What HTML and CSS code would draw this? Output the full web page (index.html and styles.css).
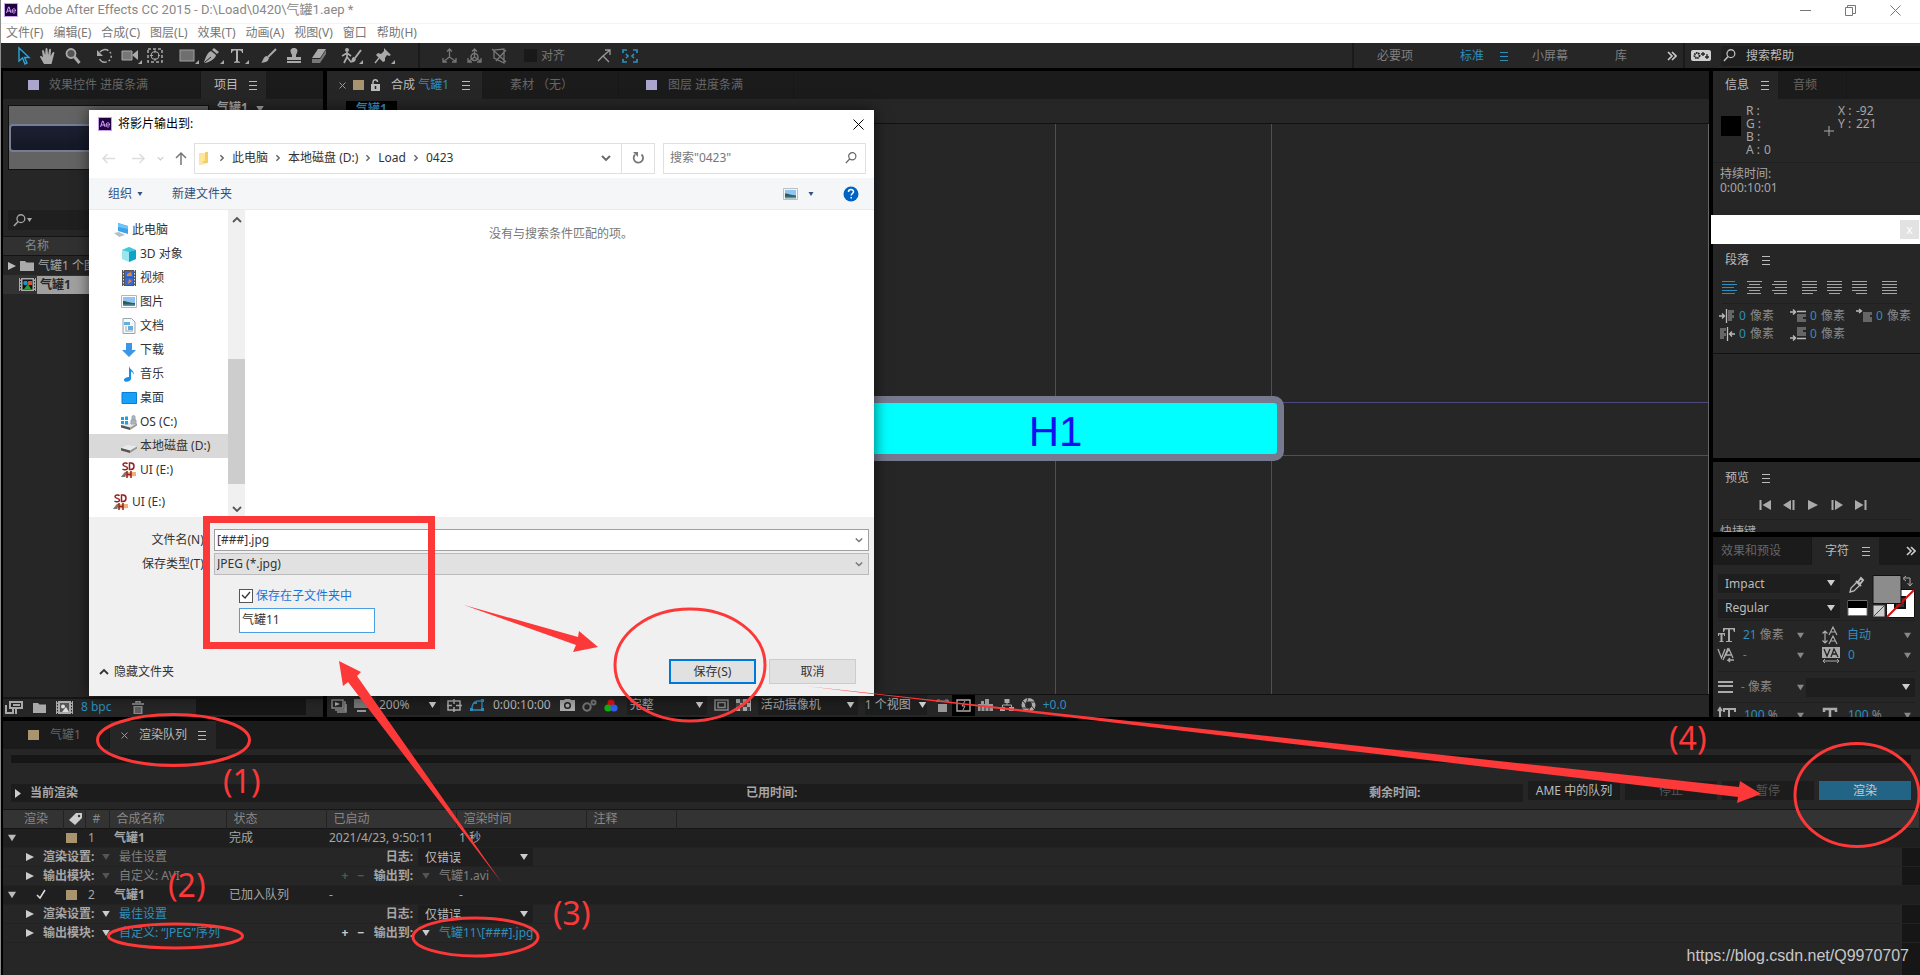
FILE: index.html
```html
<!DOCTYPE html>
<html lang="zh-CN">
<head>
<meta charset="utf-8">
<title>Adobe After Effects CC 2015</title>
<link rel="stylesheet" href="styles.css">
</head>
<body>
<svg class="sprite" aria-hidden="true">
  <symbol id="menu" viewBox="0 0 8 10"><path d="M0 1.5h8M0 5.5h8M0 9.5h8" stroke="currentColor" fill="none"/></symbol>
  <symbol id="tri" viewBox="0 0 10 8"><path d="M0 0h10L5 8z" fill="currentColor"/></symbol>
  <symbol id="triR" viewBox="0 0 8 8"><path d="M0 0l8 4-8 4z" fill="currentColor"/></symbol>
  <symbol id="more" viewBox="0 0 10 10"><path d="M1 1l4 4-4 4M5 1l4 4-4 4" stroke="currentColor" stroke-width="1.6" fill="none"/></symbol>
  <symbol id="glass" viewBox="0 0 14 14"><circle cx="8.500" cy="5" r="4.200" fill="none" stroke="currentColor" stroke-width="1.400"/><path d="M5.500 8L1 13" stroke="currentColor" stroke-width="1.600"/></symbol>
  <symbol id="ae" viewBox="0 0 14 14"><rect x=".5" y=".5" width="13" height="13" fill="#1f0040" stroke="#c9a0ee"/><path d="M2.500 10L4.500 4h.6l2 6M3.200 8h3.200M8 8h3.600c0-3-3.400-3-3.600 0 .2 2.400 2.500 2.400 3.400 1.400" fill="none" stroke="#d9a6ff"/></symbol>
  <symbol id="chev" viewBox="0 0 10 10"><path d="M1 3l4 4 4-4" fill="none" stroke="currentColor" stroke-width="1.800"/></symbol>
  <symbol id="chevR" viewBox="0 0 10 10"><path d="M3 1.500L6.500 5 3 8.500" fill="none" stroke="currentColor" stroke-width="1.800"/></symbol>
  <symbol id="picture" viewBox="0 0 16 13"><path d="M.5.500h15v12H.500z" fill="#fff" stroke="#b0b6bb"/><path d="M2 2h12v9H2z" fill="#8ec5f2"/><path d="M2 6c4 0 6 2 12 2v3H2z" fill="#2e5f55"/><path d="M2 9.500h12V11H2z" fill="#5b8fc0"/></symbol>
  <symbol id="sd" viewBox="0 0 16 16"><path d="M0 15l4-5h11v4z" fill="#f1b078"/><path d="M0 15l4-5h2l-2 5z" fill="#777"/><path d="M6.500 1.700C5.500.5 2 .8 2 2.700c0 2 4.500 1.300 4.500 3.300 0 2-3.500 2.200-5 1M8.500 1v6.500h1.500c4-.3 4-6.300 0-6.500zM6 9v7M10 9v7M6 12.500h4" fill="none" stroke="#962020" stroke-width="1.500"/></symbol>
  <symbol id="drive" viewBox="0 0 16 10"><path d="M0 5l6-3 10 1.500-7 4z" fill="#e9e9e9"/><path d="M0 5l9 2.500V10L0 7.500z" fill="#555"/><path d="M9 7.500l7-4V5.500L9 10z" fill="#999"/></symbol>
</svg>

<div class="app">
  <header class="titlebar">
    <svg width="14" height="14"><use href="#ae"/></svg>
    <h1>Adobe After Effects CC 2015 - D:\Load\0420\气罐1.aep *</h1>
    <div class="winbtns">
      <button aria-label="最小化"><svg width="11" height="11"><path d="M0 5.500h11" stroke="#777"/></svg></button>
      <button aria-label="还原"><svg width="11" height="11"><path d="M.5 2.500h7v8h-7zM2.500 2.500v-2h8v8h-3" fill="none" stroke="#777"/></svg></button>
      <button aria-label="关闭"><svg width="11" height="11"><path d="M.5.500l10 10M10.500.500l-10 10" stroke="#777"/></svg></button>
    </div>
  </header>
  <nav class="menubar">
    <button>文件(F)</button><button>编辑(E)</button><button>合成(C)</button><button>图层(L)</button><button>效果(T)</button><button>动画(A)</button><button>视图(V)</button><button>窗口</button><button>帮助(H)</button>
  </nav>

  <div class="toolbar">
    <div class="tools">
      <div class="group">
        <button aria-label="选取"><svg width="18" height="18"><path d="M5 1v13l3.500-3 2.500 6 2-1-2.500-5.500H15z" fill="#14262e" stroke="#2da3d6" stroke-width="1.400"/></svg></button>
        <button aria-label="手形"><svg width="18" height="18"><path d="M5 17L1 10c0-1.500 1.500-1.500 3 .5L3 4c.3-1.300 1.700-1.200 2 0l1.200 4L6.500 2c.3-1.300 1.800-1.300 2 0l.6 6 1-5.500c.4-1.300 1.900-1 1.900.3L11.600 9l2-3.500c.8-1 2-.4 1.700.8L12.500 17z" fill="#aaa"/></svg></button>
        <button aria-label="缩放"><svg width="18" height="18"><circle cx="7" cy="6.500" r="4.500" fill="#555" stroke="#aaa" stroke-width="1.800"/><path d="M10.500 10l5 6" stroke="#aaa" stroke-width="3"/></svg></button>
      </div>
      <div class="group">
        <button aria-label="旋转"><svg width="18" height="18"><path d="M4 5a6.300 6.300 0 1 1-.5 7" fill="none" stroke="#aaa" stroke-width="1.500" stroke-dasharray="9 2 2 2 2 2 2 2"/><path d="M1 3v6h6z" fill="#aaa"/></svg></button>
        <button class="sub" aria-label="摄像机"><svg width="18" height="18"><path d="M1 4h10v9H1z" fill="#777" stroke="#aaa"/><path d="M11 8l6-5v10z" fill="#aaa"/></svg></button>
        <button aria-label="锚点"><svg width="18" height="18"><rect x="2" y="2" width="14" height="13" fill="none" stroke="#aaa" stroke-width="1.500" stroke-dasharray="3 2"/><circle cx="9" cy="8.500" r="4" fill="none" stroke="#aaa"/><path d="M9 3v11M4 8.500h10" stroke="#aaa" stroke-dasharray="3 5 3"/></svg></button>
      </div>
      <div class="group">
        <button class="sub" aria-label="矩形"><svg width="18" height="18"><rect x="2" y="3" width="14" height="11" fill="#6f6f6f" stroke="#a0a0a0"/></svg></button>
        <button class="sub" aria-label="钢笔"><svg width="18" height="18"><path d="M11 1l5 4-2 2-5-4zM8 4l5 4c-1 4-5 6-10 8l-2-1C3 10 4 6 8 4z" fill="#aaa"/><path d="M2 15l6-5" stroke="#262626"/></svg></button>
        <button class="sub" aria-label="文字"><svg width="18" height="18"><path d="M3 2h12v4h-1c0-2-1-2.500-4-2.500V14l2 1v.7H6V15l2-1V3.500C5 3.500 4 4 4 6H3z" fill="#b0b0b0"/></svg></button>
      </div>
      <div class="group">
        <button aria-label="画笔"><svg width="18" height="18"><path d="M16 2L8 10" stroke="#aaa" stroke-width="2"/><path d="M9 11c-1 5-5 4-8 5 2-1 2-7 6-7z" fill="#aaa"/></svg></button>
        <button aria-label="仿制图章"><svg width="18" height="18"><path d="M7 8C4 3 6 1 9 1s5 2 2 7v2h5v3H2v-3h5zM2 14h14v2H2z" fill="#aaa"/></svg></button>
        <button aria-label="橡皮擦"><svg width="18" height="18"><path d="M8 2h8l-6 9H2z" fill="#aaa"/><path d="M2 12h8l6-9v4l-6 9H2z" fill="#777"/></svg></button>
      </div>
      <div class="group"><button class="sub" aria-label="Roto 笔刷"><svg width="22" height="18"><circle cx="7" cy="3" r="2" fill="#aaa"/><path d="M7 5v5l4 5M7 10l-3 6M2 9l5-3 4 3" stroke="#aaa" stroke-width="1.700" fill="none"/><path d="M21 3l-6 8" stroke="#aaa" stroke-width="2"/><path d="M16 12c-1 4-4 3-6 4 2-1 1-6 4-6z" fill="#aaa"/></svg></button></div>
      <div class="group"><button class="sub" aria-label="操控点"><svg width="18" height="18"><path d="M10 1l7 7-2 1-2-1-2 3v3l-2 1-7-7 2-2 3 1 3-3z" fill="#aaa"/><path d="M5 11l-4 5" stroke="#aaa" stroke-width="1.500"/></svg></button></div>
    </div>
    <div class="snap">
      <button class="dim" aria-label="本地轴"><svg width="18" height="18"><path d="M8.500 11V2M6 4.500L8.500 2 11 4.500M8.500 10L2 15M8.500 10l7 5M2 11v4h4M15 11v4h-4" fill="none" stroke="currentColor" stroke-width="1.300"/></svg></button>
      <button class="dim" aria-label="世界轴"><svg width="18" height="18"><path d="M8.500 11V2M6 4.500L8.500 2 11 4.500M8.500 10L2 15M8.500 10l7 5M2 11v4h4M15 11v4h-4" fill="none" stroke="currentColor" stroke-width="1.300"/><circle cx="8.500" cy="10" r="3.500" fill="none" stroke="currentColor" stroke-width="1.500"/></svg></button>
      <button class="dim" aria-label="视图轴"><svg width="18" height="18"><path d="M3 3v8l10 5V2zM1 2l14 13M15 3L5 14" fill="none" stroke="currentColor" stroke-width="1.300"/></svg></button>
      <label class="snapbox"><input type="checkbox">对齐</label>
      <button aria-label="对齐边缘"><svg width="18" height="18"><path d="M2 14l5-5 6 6M7 9l7-6M9 3h5v5" fill="none" stroke="#999" stroke-width="1.300"/></svg></button>
      <button class="blue" aria-label="对齐框"><svg width="18" height="18"><path d="M2 6V3h4M12 3h4v3M16 12v3h-4M6 15H2v-3M5 7l2 2-2 2M13 7l-2 2 2 2" fill="none" stroke="currentColor" stroke-width="1.700"/></svg></button>
    </div>
    <div class="spaces">
      <button>必要项</button>
      <button class="blue standard">标准<svg width="8" height="10"><use href="#menu"/></svg></button>
      <button>小屏幕</button>
      <button class="library">库</button>
      <button class="bright" aria-label="更多"><svg width="10" height="10"><use href="#more"/></svg></button>
    </div>
    <div class="help">
      <button aria-label="同步设置"><svg width="20" height="11"><rect width="20" height="11" rx="2" fill="#d0d0d0"/><circle cx="6" cy="5.500" r="2.500" fill="none" stroke="#222" stroke-width="2" stroke-dasharray="1.500 .6"/><path d="M12 2v4M10 4h4M16 4v5M14 7h4" stroke="#222" stroke-width="1.300"/></svg></button>
      <label class="helpsearch"><svg width="13" height="13"><use href="#glass"/></svg><input type="text" value="搜索帮助" aria-label="搜索帮助"></label>
    </div>
  </div>

  <main class="workspace">
    <section class="panel project">
      <div class="tabs">
        <button class="tab fxtab"><i class="sw lilac"></i>效果控件 进度条满</button>
        <button class="tab on projtab">项目<svg width="8" height="10"><use href="#menu"/></svg></button>
      </div>
      <div class="thumbrow"><div class="thumb"><div class="pill"></div></div><p>气罐1 <svg width="8" height="6"><use href="#tri"/></svg></p></div>
      <label class="projsearch"><svg width="13" height="13"><use href="#glass"/></svg><svg width="5" height="4"><use href="#tri"/></svg><input type="text" aria-label="搜索项目"></label>
      <div class="projhead">名称</div>
      <div class="projrow"><svg width="8" height="8"><use href="#triR"/></svg><svg width="14" height="11"><path d="M0 1h5l1.500 1.500H14V11H0z" fill="#aaa"/></svg><span>气罐1 个图层</span></div>
      <div class="projrow picked"><svg width="17" height="13"><path d="M0 0h17v13H0z" fill="#aaa"/><path d="M1.500 0v13M15.500 0v13" stroke="#222" stroke-dasharray="1.500 1.500"/><path d="M3.500 1.500h10v10h-10z" fill="#111"/><circle cx="6.500" cy="5" r="2.300" fill="#1e90d8"/><path d="M9 3h4v4H9z" fill="#d8502a"/><path d="M5 11l4-5 3 5z" fill="#2aa02a"/></svg><span>气罐1</span></div>
      <footer class="projfoot">
        <button aria-label="解释素材"><svg width="17" height="13"><path d="M4 1h12v6H4z" fill="none" stroke="#aaa" stroke-width="2"/><path d="M7 4h7M0 4v8h7V7M10 8v5" stroke="#aaa" stroke-width="2" fill="none"/></svg></button>
        <button aria-label="新建文件夹"><svg width="13" height="11"><path d="M0 1h5l1.500 1.500H13V11H0z" fill="#aaa"/></svg></button>
        <button aria-label="新建合成"><svg width="17" height="13"><path d="M0 0h17v13H0z" fill="#aaa"/><path d="M1.500 0v13M15.500 0v13" stroke="#222" stroke-dasharray="1.500 1.500"/><path d="M4 2h9v9H4z" fill="#555"/><circle cx="7" cy="5.500" r="2" fill="#ddd"/><path d="M6 11l4-5 3 5z" fill="#ddd"/></svg></button>
        <button class="blue bpc">8 bpc</button>
        <button aria-label="删除"><svg width="12" height="13"><path d="M0 3h12M4 2V.700h4V2" stroke="#999" stroke-width="1.500" fill="none"/><path d="M1.500 5h9v8h-9z" fill="#888"/><path d="M4 6v6M6 6v6M8 6v6" stroke="#333"/></svg></button>
        <div class="hscroll"></div>
      </footer>
    </section>

    <section class="panel comp">
      <div class="tabs">
        <button class="tab on comptab"><svg width="7" height="7"><path d="M.5.500l6 6M6.500.500l-6 6" stroke="#999"/></svg><i class="sw tan"></i><svg width="9" height="12"><path d="M2 5V3c0-3 4.500-3 4.500 0" fill="none" stroke="#bbb" stroke-width="1.400"/><path d="M0 5h9v7H0z" fill="#bbb"/><path d="M4.500 7v3" stroke="#222" stroke-width="1.500"/></svg><span>合成 <b class="blue">气罐1</b></span><svg width="8" height="10"><use href="#menu"/></svg></button>
        <button class="tab foottab">素材 （无）</button>
        <button class="tab layertab"><i class="sw lilac"></i>图层 进度条满</button>
      </div>
      <div class="crumbs"><button class="blue">气罐1</button></div>
      <div class="viewer">
        <i class="guide h g1"></i><i class="guide h g2"></i>
        <i class="guide v g3"></i><i class="guide v g4"></i>
        <div class="bar">H1</div>
      </div>
      <footer class="compfoot">
        <button aria-label="始终预览"><svg width="16" height="13"><path d="M1 1h11v8H1zM13 3h1v8H4M15 5v8H6" fill="none" stroke="#888" stroke-width="1.500"/><path d="M4 3l5 2-5 2z" fill="#aaa"/></svg></button>
        <button aria-label="主查看器"><svg width="15" height="13"><path d="M0 0h15v9H0z" fill="#777"/><path d="M3 12h9" stroke="#999" stroke-width="2"/></svg></button>
        <button class="drop zoom">200%<svg width="9" height="6"><use href="#tri"/></svg></button>
        <button aria-label="网格"><svg width="16" height="13"><path d="M1 2h12v9H1zM7 0v5M7 8v5M0 6.500h5M9 6.500h6" fill="none" stroke="#aaa" stroke-width="1.500"/></svg></button>
        <button class="blue" aria-label="蒙版"><svg width="14" height="13"><path d="M2 11V8c1-4 3-6 6-6h4v9z" fill="none" stroke="currentColor" stroke-width="1.300"/><path d="M0 9h3v3H0zM11 0h3v3h-3zM11 9h3v3h-3zM4 3h3v2H4z" fill="currentColor"/></svg></button>
        <button class="time">0:00:10:00</button>
        <button aria-label="快照"><svg width="15" height="12"><path d="M0 1h4l1-1h5l1 1h4v11H0z" fill="#aaa"/><circle cx="7.500" cy="6.500" r="2.800" fill="none" stroke="#222" stroke-width="1.500"/></svg></button>
        <button aria-label="显示快照"><svg width="15" height="13"><circle cx="5" cy="8" r="3.700" fill="none" stroke="#777" stroke-width="2"/><circle cx="11.500" cy="3.500" r="2" fill="none" stroke="#777" stroke-width="2"/></svg></button>
        <button aria-label="通道"><svg width="16" height="13"><circle cx="7" cy="4" r="3.600" fill="#e01010"/><circle cx="4" cy="9" r="3.600" fill="#10b010"/><circle cx="10" cy="9" r="3.600" fill="#3060f0"/></svg></button>
        <button class="drop full">完整<svg width="9" height="6"><use href="#tri"/></svg></button>
        <button aria-label="目标区域"><svg width="15" height="12"><path d="M1 1h13v10H1z" fill="none" stroke="#888" stroke-width="1.500"/><path d="M4 3.500h7v5H4z" fill="none" stroke="#888" stroke-width="1.500"/></svg></button>
        <button aria-label="透明网格"><svg width="15" height="12"><path d="M0 0h15v12H0z" fill="#aaa"/><path d="M4 0h3v4H4zM11 0h3v4h-3zM0 4h4v4H0zM7 4h4v4H7zM4 8h3v4H4zM11 8h3v4h-3z" fill="#444"/></svg></button>
        <button class="drop cam">活动摄像机<svg width="9" height="6"><use href="#tri"/></svg></button>
        <button class="drop views">1 个视图<svg width="9" height="6"><use href="#tri"/></svg></button>
        <button aria-label="像素长宽比"><svg width="13" height="13"><path d="M2 5h9v8H2z" fill="#999"/><path d="M1 3V1h3M12 3V1H9M0 2h13" stroke="#888" fill="none"/></svg></button>
        <button class="boxed" aria-label="快速预览"><svg width="15" height="13"><path d="M1 1h13v11H1z" fill="none" stroke="#aaa" stroke-width="1.400"/><path d="M9 2L6 7h3l-2 4" stroke="#aaa" fill="none"/></svg></button>
        <button aria-label="时间轴"><svg width="15" height="12"><path d="M0 5h3V2h3v3h1V0h4v5h4v7H0z" fill="#999"/><path d="M3 7v5M7 7v5M11 7v5" stroke="#333"/></svg></button>
        <button aria-label="流程图"><svg width="14" height="12"><path d="M4.500 0h5v4h-5zM0 8h5v4H0zM9 8h5v4H9z" fill="#aaa"/><path d="M7 4v2M2.500 8V6h9v2" stroke="#aaa" fill="none"/></svg></button>
        <button aria-label="重置曝光"><svg width="15" height="14"><circle cx="7.500" cy="7" r="5.200" fill="none" stroke="#aaa" stroke-width="3.600"/><path d="M7 0l-2 6M14 4l-6 0M13 11L9 6M7 14l2-5M1 10l6 0M2 3l4 5" stroke="#333"/></svg></button>
        <button class="blue">+0.0</button>
      </footer>
    </section>

    <aside class="side">
      <section class="panel info">
        <div class="tabs"><button class="tab on infotab">信息<svg width="8" height="10"><use href="#menu"/></svg></button><button class="tab audiotab">音频</button></div>
        <div class="infogrid">
          <i class="chip"></i>
          <dl><dt>R :</dt><dd></dd><dt>G :</dt><dd></dd><dt>B :</dt><dd></dd><dt>A :</dt><dd>0</dd></dl>
          <svg width="10" height="10"><path d="M5 0v10M0 5h10" stroke="#aaa"/></svg>
          <dl><dt>X :</dt><dd>-92</dd><dt>Y :</dt><dd>221</dd></dl>
        </div>
        <p class="dur">持续时间:<br>0:00:10:01</p>
      </section>
      <div class="floatbar"><button aria-label="关闭">x</button></div>
      <section class="panel para">
        <div class="phead">段落<svg width="8" height="10"><use href="#menu"/></svg></div>
        <div class="aligns">
          <button class="blue" aria-label="左对齐"><svg width="15" height="14"><path d="M0 .5h13M0 3.500h15M0 6.500h12M0 9.500h15M0 12.500h13" stroke="currentColor"/></svg></button>
          <button aria-label="居中"><svg width="15" height="14"><path d="M0 .5h15M2 3.500h11M0 6.500h15M2 9.500h11M0 12.500h14" stroke="currentColor"/></svg></button>
          <button aria-label="右对齐"><svg width="15" height="14"><path d="M2 .5h13M0 3.500h15M3 6.500h12M0 9.500h15M2 12.500h13" stroke="currentColor"/></svg></button>
          <button class="wide" aria-label="末行左"><svg width="15" height="14"><path d="M0 .5h15M0 3.500h15M0 6.500h15M0 9.500h15M0 12.500h11" stroke="currentColor"/></svg></button>
          <button aria-label="末行中"><svg width="15" height="14"><path d="M0 .5h15M0 3.500h15M0 6.500h15M0 9.500h15M2 12.500h11" stroke="currentColor"/></svg></button>
          <button aria-label="末行右"><svg width="15" height="14"><path d="M0 .5h15M0 3.500h15M0 6.500h15M0 9.500h15M4 12.500h11" stroke="currentColor"/></svg></button>
          <button class="wide" aria-label="全部"><svg width="15" height="14"><path d="M0 .5h15M0 3.500h15M0 6.500h15M0 9.500h15M0 12.500h15" stroke="currentColor"/></svg></button>
        </div>
        <div class="indents">
          <span><svg width="16" height="14"><path d="M0 7h5M3 4.500L5.500 7 3 9.500M7.500 0v14" stroke="#bbb" fill="none" stroke-width="1.300"/><path d="M9 1h6v3h-2v2h2v3h-2v3h-4z" fill="#666"/></svg><b>0</b> 像素</span>
          <span><svg width="16" height="14"><path d="M0 3h5M3 .5L5.500 3 3 5.500M7 2.500h9" stroke="#bbb" fill="none" stroke-width="1.500"/><path d="M7 5h9v3h-3v2h3v3H7z" fill="#666"/></svg><b>0</b> 像素</span>
          <span><svg width="16" height="14"><path d="M0 2h5M3 0l2.500 2L3 4" stroke="#bbb" fill="none" stroke-width="1.300"/><path d="M7 3h9v3h-2v2h2v5H7z" fill="#666"/></svg><b>0</b> 像素</span>
          <span><svg width="16" height="14"><path d="M16 7h-5M13 4.500L10.500 7 13 9.500M8.500 0v14" stroke="#bbb" fill="none" stroke-width="1.300"/><path d="M1 1h6v3H5v2h2v3H5v3H1z" fill="#666"/></svg><b>0</b> 像素</span>
          <span><svg width="16" height="14"><path d="M0 11h5M3 8.500L5.500 11 3 13.500M7 11.500h9" stroke="#bbb" fill="none" stroke-width="1.500"/><path d="M7 0h9v3h-3v2h3v4H7z" fill="#666"/></svg><b>0</b> 像素</span>
        </div>
      </section>
      <section class="panel spare"></section>
      <section class="panel preview">
        <div class="phead">预览<svg width="8" height="10"><use href="#menu"/></svg></div>
        <div class="transport">
          <button aria-label="第一帧"><svg width="12" height="10"><path d="M1.500 0v10" stroke="#aaa" stroke-width="2"/><path d="M12 0v10L3.500 5z" fill="#aaa"/></svg></button>
          <button aria-label="上一帧"><svg width="12" height="10"><path d="M8 0v10L0 5z" fill="#aaa"/><path d="M10.500 0v10" stroke="#aaa" stroke-width="2"/></svg></button>
          <button aria-label="播放"><svg width="12" height="10"><path d="M1 0v10l10-5z" fill="#aaa"/></svg></button>
          <button aria-label="下一帧"><svg width="12" height="10"><path d="M4 0v10l8-5z" fill="#aaa"/><path d="M1.500 0v10" stroke="#aaa" stroke-width="2"/></svg></button>
          <button aria-label="最后一帧"><svg width="12" height="10"><path d="M0 0v10l8.500-5z" fill="#aaa"/><path d="M10.500 0v10" stroke="#aaa" stroke-width="2"/></svg></button>
        </div>
        <p class="keys">快捷键</p>
      </section>
      <section class="panel chars">
        <div class="tabs"><button class="tab presets">效果和预设</button><button class="tab on chartab">字符<svg width="8" height="10"><use href="#menu"/></svg></button><button class="bright" aria-label="更多"><svg width="10" height="10"><use href="#more"/></svg></button></div>
        <div class="fonts">
          <div class="fsel">
            <div class="dd"><select aria-label="字体"><option>Impact</option></select></div>
            <div class="dd"><select aria-label="样式"><option>Regular</option></select></div>
          </div>
          <svg class="swatches" width="66" height="44">
            <path d="M2 18l1-4 6-6 3 3-6 6z" fill="none" stroke="#bbb" stroke-width="1.300"/><path d="M8 7l5 5M10 8l3-4 2 2-3 4z" stroke="#bbb" stroke-width="2"/>
            <path d="M0 26.500h19v15H0z" fill="#fff" stroke="#777"/><path d="M0 27h19v7H0z" fill="#000"/>
            <path d="M38.500 15.500h28v28h-28z" fill="#fff" stroke="#111"/><path d="M47 23h10v11H47z" fill="#333" stroke="#111" stroke-width="2"/><path d="M39 43L66 16" stroke="#d01010" stroke-width="2"/>
            <path d="M25.500 31.500h11v11h-11z" fill="#ccc"/><path d="M26 42l10-10" stroke="#d01010"/>
            <path d="M25 1.500h28v28H25z" fill="#8c8c8c" stroke="#111"/>
            <path d="M56 4h6v7M58 2l-3 2.500L58 7M59.500 9l2.500 3 2.500-3" fill="none" stroke="#aaa"/>
          </svg>
        </div>
        <div class="metrics">
          <span><svg width="17" height="14"><path d="M5 0h12v4h-1l-1-2.500h-3V13h2v1H8v-1h2V1.500H7L6 4H5zM0 5h7v3H6V6.500H4.500V13h1v1h-4v-1h1V6.500H1V8H0z" fill="#aaa"/></svg><em><b>21</b> 像素</em><svg width="7" height="7"><use href="#tri"/></svg></span>
          <span><svg width="17" height="17"><path d="M3 4v12M.500 6.500L3 4l2.500 2.500M.500 13.500L3 16l2.500-2.500M7 8l4-8 4 8M9 5h4M7 17l4-8 4 8M9 14h4" fill="none" stroke="#aaa" stroke-width="1.200"/></svg><em><b>自动</b></em><svg width="7" height="7"><use href="#tri"/></svg></span>
          <span><svg width="17" height="14"><path d="M0 1l3.500 9L7 1M6 10L11 1l4 9M8 7h6M5 12L10 0M16 12h-6l2-2M10 12l2 2" fill="none" stroke="#aaa" stroke-width="1.300"/></svg><em><b>-</b></em><svg width="7" height="7"><use href="#tri"/></svg></span>
          <span><svg width="18" height="17"><path d="M0 0h18v11H0z" fill="#aaa"/><path d="M2 2l3 7 3-7M9 10l3-8 4 8M10 7h5" fill="none" stroke="#222" stroke-width="1.300"/><path d="M1 14h16M3 12l-2 2 2 2M15 12l2 2-2 2" fill="none" stroke="#aaa"/></svg><em><b>0</b></em><svg width="7" height="7"><use href="#tri"/></svg></span>
        </div>
        <div class="stroke">
          <span><svg width="15" height="13"><path d="M0 1h15M0 5h15M0 11h15" stroke="#aaa" stroke-width="2"/></svg><em><b>-</b> 像素</em><svg width="7" height="7"><use href="#tri"/></svg></span>
          <div class="dd"><select aria-label="描边方式"><option></option></select></div>
        </div>
        <div class="metrics scale">
          <span><svg width="18" height="14"><path d="M2 0v14M0 3l2-3 2 3M6 1v3M5 1h12v3M11 1v13" fill="none" stroke="#aaa" stroke-width="2"/></svg><em><b>100</b> %</em><svg width="7" height="7"><use href="#tri"/></svg></span>
          <span><svg width="18" height="14"><path d="M2 4V1h12v3M8 1v13" fill="none" stroke="#aaa" stroke-width="2.500"/></svg><em><b>100</b> %</em><svg width="7" height="7"><use href="#tri"/></svg></span>
        </div>
      </section>
    </aside>
  </main>

  <section class="panel queue">
    <div class="tabs">
      <button class="tab qcomp"><i class="sw tan"></i>气罐1</button>
      <button class="tab on qtab"><svg width="7" height="7"><path d="M.5.500l6 6M6.500.500l-6 6" stroke="#999"/></svg>渲染队列<svg width="8" height="10"><use href="#menu"/></svg></button>
    </div>
    <div class="progress"></div>
    <div class="current">
      <div class="status"><span class="now"><svg width="6" height="9"><path d="M0 0l6 4.500L0 9z" fill="#ccc"/></svg>当前渲染</span><span class="elapsed">已用时间:</span><span class="remain">剩余时间:</span></div>
      <button>AME 中的队列</button><button disabled>停止</button><button disabled>暂停</button><button class="go">渲染</button>
    </div>
    <div class="list">
    <table>
      <colgroup><col class="c1"><col class="c2"><col class="c3"><col class="c4"><col class="c5"><col class="c6"><col class="c7"><col class="c8"><col></colgroup>
      <thead><tr><th>渲染</th><th class="tag"><svg width="13" height="12"><path d="M7 0h6v5l-7 7-6-5z" fill="#ccc"/><circle cx="10" cy="3" r="1.200" fill="#333"/></svg></th><th>#</th><th>合成名称</th><th>状态</th><th>已启动</th><th>渲染时间</th><th>注释</th><th></th></tr></thead>
      <tbody>
        <tr class="item"><td><svg width="8" height="8"><use href="#tri"/></svg></td><td><i class="sw tan"></i></td><td>1</td><td class="name">气罐1</td><td>完成</td><td>2021/4/23, 9:50:11</td><td>1 秒</td><td></td><td></td></tr>
        <tr><td colspan="9"><div class="detail done"><svg width="8" height="8"><use href="#triR"/></svg><b>渲染设置:</b><button aria-label="渲染设置"><svg width="8" height="6"><use href="#tri"/></svg></button><a href="#">最佳设置</a><span></span><b class="r">日志:</b><div class="dd"><select aria-label="日志"><option>仅错误</option></select></div></div></td></tr>
        <tr><td colspan="9"><div class="detail done"><svg width="8" height="8"><use href="#triR"/></svg><b>输出模块:</b><button aria-label="输出模块"><svg width="8" height="6"><use href="#tri"/></svg></button><a href="#">自定义: AVI</a><span class="pm"><button>+</button><button>−</button></span><b class="r">输出到:</b><button aria-label="输出到"><svg width="8" height="6"><use href="#tri"/></svg></button><a href="#">气罐1.avi</a></div></td></tr>
        <tr class="item"><td><svg width="8" height="8"><use href="#tri"/></svg><label class="tick"><input type="checkbox" checked aria-label="渲染此项"><svg width="10" height="9"><path d="M1 5l3 3 5-8" fill="none" stroke="#ddd" stroke-width="1.500"/></svg></label></td><td><i class="sw tan"></i></td><td>2</td><td class="name">气罐1</td><td>已加入队列</td><td>-</td><td>-</td><td></td><td></td></tr>
        <tr><td colspan="9"><div class="detail"><svg width="8" height="8"><use href="#triR"/></svg><b>渲染设置:</b><button aria-label="渲染设置"><svg width="8" height="6"><use href="#tri"/></svg></button><a href="#">最佳设置</a><span></span><b class="r">日志:</b><div class="dd"><select aria-label="日志"><option>仅错误</option></select></div></div></td></tr>
        <tr><td colspan="9"><div class="detail"><svg width="8" height="8"><use href="#triR"/></svg><b>输出模块:</b><button aria-label="输出模块"><svg width="8" height="6"><use href="#tri"/></svg></button><a href="#">自定义: “JPEG”序列</a><span class="pm"><button>+</button><button>−</button></span><b class="r">输出到:</b><button aria-label="输出到"><svg width="8" height="6"><use href="#tri"/></svg></button><a href="#">气罐11\[###].jpg</a></div></td></tr>
      </tbody>
    </table>
    </div>
  </section>
</div>

<div class="dialog" role="dialog" aria-label="将影片输出到">
  <header><svg width="14" height="14"><use href="#ae"/></svg><h2>将影片输出到:</h2><button aria-label="关闭"><svg width="11" height="11"><path d="M.5.500l10 10M10.500.500l-10 10" stroke="#000"/></svg></button></header>
  <div class="address">
    <div class="arrows">
      <button aria-label="后退"><svg width="13" height="11"><path d="M13 5.500H1M5.500 1L1 5.500 5.500 10" fill="none" stroke="#ddd" stroke-width="1.500"/></svg></button>
      <button aria-label="前进"><svg width="13" height="11"><path d="M0 5.500h12M7.500 1L12 5.500 7.500 10" fill="none" stroke="#ddd" stroke-width="1.500"/></svg></button>
      <button class="recent" aria-label="最近"><svg width="7" height="7"><use href="#chev"/></svg></button>
      <button aria-label="上移"><svg width="12" height="13"><path d="M6 13V1M1 6l5-5 5 5" fill="none" stroke="#777" stroke-width="1.500"/></svg></button>
    </div>
    <div class="path">
      <svg class="folder" width="10" height="13"><path d="M0 1h7v11l-7 1z" fill="#ffe49a"/><path d="M6 0h3v11H4V9h2z" fill="#f5cd62"/></svg>
      <svg class="sep" width="8" height="10"><use href="#chevR"/></svg><button>此电脑</button><svg class="sep" width="8" height="10"><use href="#chevR"/></svg><button>本地磁盘 (D:)</button><svg class="sep" width="8" height="10"><use href="#chevR"/></svg><button>Load</button><svg class="sep" width="8" height="10"><use href="#chevR"/></svg><button>0423</button>
      <button class="open" aria-label="展开"><svg width="10" height="10"><use href="#chev"/></svg></button>
    </div>
    <button class="refresh" aria-label="刷新"><svg width="12" height="12"><path d="M9.500 2.500A4.700 4.700 0 1 1 3 2.700" fill="none" stroke="#777" stroke-width="1.800"/><path d="M1 0h5v5z" fill="#777"/></svg></button>
    <label class="find"><input type="text" placeholder="搜索&quot;0423&quot;" aria-label="搜索"><svg width="12" height="12"><use href="#glass"/></svg></label>
  </div>
  <div class="cmds">
    <button>组织<svg width="6" height="4"><use href="#tri"/></svg></button><button>新建文件夹</button>
    <button class="view" aria-label="视图"><svg width="15" height="12"><use href="#picture"/></svg><svg width="6" height="4"><use href="#tri"/></svg></button>
    <button aria-label="帮助"><svg width="16" height="16"><circle cx="8" cy="8" r="7.500" fill="#0062c4"/><path d="M5.500 6c0-3.200 5-3.200 5-.2 0 1.700-2.300 1.800-2.300 3.700M8.200 11v1.600" fill="none" stroke="#fff" stroke-width="1.500"/></svg></button>
  </div>
  <div class="body">
    <ul class="tree">
      <li class="root"><svg width="16" height="16"><path d="M5 1l10 3v8L5 9z" fill="#3ba3ea"/><path d="M5 1l10 3v3L5 5z" fill="#6cc4f7"/><path d="M1 11l5-1 6 3-6 2z" fill="#b8bfc5"/></svg>此电脑</li>
      <li><svg width="16" height="16"><path d="M1 4l7-3 7 3v9l-7 3-7-3z" fill="#9be5ee"/><path d="M8 5l7-1v9l-7 3z" fill="#10a3c7"/><path d="M1 4l7-3 7 3-7 2z" fill="#42c8dd"/></svg>3D 对象</li>
      <li><svg width="16" height="16"><path d="M1 0h14v16H1z" fill="#555"/><path d="M2.500 0v16M13.500 0v16" stroke="#ddd" stroke-dasharray="1.500 1.500"/><path d="M4 1h8v6H4zM4 8h8v7H4z" fill="#3868d8"/><path d="M6 4l4-2 1 4H6zM8 9l3 2-4 3z" fill="#e98b20"/></svg>视频</li>
      <li><svg width="16" height="16" viewBox="0 -1 16 16"><use href="#picture" width="16" height="13"/></svg>图片</li>
      <li><svg width="16" height="16"><path d="M2 .500h8.500L14 4v11.500H2z" fill="#f5f8fa" stroke="#9aa5ad"/><path d="M3 4h6v3H3zM7 8h5v4H7z" fill="#65aedb"/><path d="M4 9h2M4 11h2M4 13h8" stroke="#9ab"/></svg>文档</li>
      <li><svg width="16" height="16"><path d="M5 1h6v7h4l-7 7-7-7h4z" fill="#3c96e8"/></svg>下载</li>
      <li><svg width="16" height="16"><path d="M8 0c1 4 5 4 5 9-1-3-3-4-3-3v7c-.5 3-7 4-7 1 0-2 3-3 5-3z" fill="#1590e8"/></svg>音乐</li>
      <li><svg width="16" height="16"><path d="M1 2.500h14.500v11H1z" fill="#18a0fb" stroke="#0c7ed0"/></svg>桌面</li>
      <li><svg width="16" height="16"><use href="#drive" y="6" width="16" height="10"/><path d="M0 3h3v3H0zM4 2.500h3V6H4zM0 7h3v3H0zM4 7h3v3.500H4z" fill="#12a5ea"/><path d="M11 6V3c0-2 3-2 3 0v3M10 6h5v4h-5z" fill="#aab5bc" stroke="#99a4aa"/></svg>OS (C:)</li>
      <li class="sel"><svg width="16" height="16"><use href="#drive" y="5" width="16" height="10"/></svg>本地磁盘 (D:)</li>
      <li><svg width="16" height="16"><use href="#sd"/></svg>UI (E:)</li>
      <li class="root last"><svg width="16" height="16"><use href="#sd"/></svg>UI (E:)</li>
    </ul>
    <div class="scroll"><svg class="up" width="10" height="10"><use href="#chev"/></svg><i></i><svg width="10" height="10"><use href="#chev"/></svg></div>
    <p class="empty">没有与搜索条件匹配的项。</p>
  </div>
  <form class="bottom">
    <div class="field"><label for="fn">文件名(N):</label><div class="combo"><input id="fn" type="text" value="[###].jpg"><svg width="8" height="8"><use href="#chev"/></svg></div></div>
    <div class="field"><label for="ft">保存类型(T):</label><div class="combo gray"><select id="ft"><option>JPEG (*.jpg)</option></select><svg width="8" height="8"><use href="#chev"/></svg></div></div>
    <div class="subfolder">
      <label><input type="checkbox" checked><svg class="mark" width="10" height="9"><path d="M1 4l3 3 5-6" fill="none" stroke="#333" stroke-width="1.300"/></svg>保存在子文件夹中</label>
      <input type="text" value="气罐11" aria-label="子文件夹">
    </div>
    <div class="actions">
      <button type="button" class="hide"><svg class="up" width="10" height="10"><use href="#chev"/></svg>隐藏文件夹</button>
      <button type="button" class="btn primary">保存(S)</button><button type="button" class="btn">取消</button>
    </div>
  </form>
</div>

<svg class="notes" width="1920" height="975" viewBox="0 0 1920 975">
  <g fill="none" stroke="#fc3838" stroke-width="3">
    <rect x="206.500" y="519.500" width="225" height="126" stroke-width="7"/>
    <ellipse cx="690" cy="665" rx="75" ry="56"/>
    <ellipse cx="173.500" cy="740" rx="76" ry="25.500"/>
    <ellipse cx="175.500" cy="936" rx="67" ry="12"/>
    <ellipse cx="475.500" cy="937" rx="62.500" ry="19"/>
    <ellipse cx="1857" cy="795" rx="62" ry="51.500"/>
  </g>
  <g fill="#fc3838">
    <path d="M464 605L578 637 579 631 598 647 573 652 576 645z"/>
    <path d="M502 883L348 682 343 686 339 661 361 672 357 676z"/>
    <path d="M805 686L1739 787 1740 781 1761 794 1737 803 1738 797z"/>
    <text x="223" y="793">(1)</text><text x="168" y="897">(2)</text><text x="553" y="925">(3)</text><text x="1669" y="750">(4)</text>
  </g>
  <text class="url" x="1909" y="961" text-anchor="end">https://blog.csdn.net/Q9970707</text>
</svg>
</body>
</html>
```
FILE: styles.css
```css
* { box-sizing: border-box; }
body { margin: 0; background: #000; color: #a6a6a6; font: 12px/16px "Noto Sans", "Noto Sans CJK SC", sans-serif; }
button, input, select { font: inherit; color: inherit; background: none; border: 0; padding: 0; margin: 0; border-radius: 0; outline: 0; }
button { display: flex; align-items: center; white-space: nowrap; }
select { appearance: none; }
h1, h2, p, dl, dd, ul { margin: 0; padding: 0; font-size: 12px; font-weight: 400; }
svg { display: block; flex: none; overflow: visible; }
a { color: inherit; text-decoration: none; }
.sprite { position: absolute; width: 0; height: 0; }
.blue { color: #2d8fbd; }
.bright { color: #ccc; }
.app { min-height: 100vh; display: flex; flex-direction: column; border-left: 1px solid #8c8c8c; }

.titlebar { display: flex; align-items: center; gap: 7px; height: 24px; padding: 0 19px 3px 3px; background: #fff; border-bottom: 1px solid #f3f3f3; color: #888; }
.titlebar h1 { font-size: 13px; font-family: Roboto, "Noto Sans CJK SC", sans-serif; }
.winbtns { display: flex; gap: 34px; margin-left: auto; }
.menubar { display: flex; gap: 10px; height: 19px; padding: 0 5px 1px; background: #fff; color: #777; }

.toolbar { display: flex; height: 28px; background: #262626; border-bottom: 3px solid #000; }
.tools { display: flex; gap: 7px; width: 419px; padding-left: 9px; border-right: 2px solid #1a1a1a; }
.group { display: flex; }
.group button, .snap > button { width: 25px; justify-content: center; }
.sub { position: relative; }
.sub::after { content: ""; position: absolute; right: 0; bottom: 4px; border: 2px solid; border-color: transparent #aaa #aaa transparent; }
.snap { display: flex; padding-left: 17px; flex: 1; }
.dim { color: #777; }
.snapbox { display: flex; align-items: center; gap: 4px; margin: 0 27px 0 12px; color: #777; }
.snapbox input { appearance: none; width: 13px; height: 13px; background: #191919; }
.spaces { display: flex; align-items: center; gap: 40px; width: 331px; padding-left: 23px; border-left: 2px solid #1a1a1a; color: #808080; }
.spaces .blue { color: #2d8fbd; }
.spaces .bright { color: #ccc; }
.standard { gap: 16px; margin: 0 -16px 0 7px; }
.library { margin-left: 7px; }
.help { display: flex; align-items: center; gap: 10px; width: 237px; padding: 0 3px 0 6px; border-left: 2px solid #1a1a1a; }
.helpsearch { display: flex; align-items: center; gap: 10px; flex: 1; height: 20px; padding-left: 2px; background: #1f1f1f; color: #bbb; }
.helpsearch input { min-width: 0; }

.workspace { flex: 1; display: grid; grid-template-columns: 320px minmax(0, 1fr) 207px; gap: 4px; padding-left: 2px; background: #000; }
.panel { background: #262626; display: flex; flex-direction: column; }
.panel > * { flex-shrink: 0; }
.tabs { display: flex; height: 28px; background: #1b1b1b; }
.tab { color: #666; border-right: 1px solid #171717; }
.tab.on { background: #262626; color: #bbb; border: 0; }
.sw { width: 11px; height: 10px; flex: none; display: block; }
.lilac { background: #a9a5cc; }
.tan { background: #a8946f; }

.fxtab { gap: 10px; width: 198px; padding-left: 25px; }
.projtab { gap: 11px; width: 65px; padding-left: 13px; }
.thumbrow { display: flex; gap: 8px; height: 111px; padding: 6px 0 0 5px; }
.thumbrow p { display: flex; align-items: baseline; gap: 8px; margin-top: -5px; height: 16px; font-weight: 700; }
.thumb { width: 201px; height: 65px; padding-top: 18px; border: 1px solid #111; background: #636363; }
.pill { height: 28px; border: 2px solid #777d95; border-radius: 4px; background: linear-gradient(#1b2032, #141724); }
.projsearch { display: flex; align-items: center; gap: 1px; height: 20px; margin: 0 5px; padding-left: 5px; background: #1f1f1f; }
.projhead { height: 20px; margin-top: 6px; padding: 1px 22px; background: #313131; border: solid #141414; border-width: 1px 0; color: #888; }
.projrow { display: flex; align-items: center; gap: 4px; height: 19px; padding-left: 5px; }
.projrow svg:first-child { color: #bbb; }
.projrow.picked { background: #333; padding-left: 16px; gap: 1px; color: #262626; font-weight: 700; }
.picked span { flex: 1; background: #a0a0a0; padding: 1px 3px; }
.projfoot { display: flex; align-items: center; gap: 10px; height: 20px; margin-top: auto; padding: 0 0 2px 3px; border-top: 2px solid #161616; }
.bpc { margin: 0 10px 0 -2px; }
.hscroll { width: 110px; height: 16px; margin-left: 42px; background: #161616; }

.comptab { width: 155px; padding-left: 12px; gap: 7px; }
.comptab b { font-weight: 400; }
.comptab span { margin: 0 6px 0 4px; }
.foottab { width: 137px; padding-left: 28px; }
.layertab { width: 175px; padding-left: 27px; gap: 11px; }
.crumbs { height: 25px; padding: 2px 19px 0; border-bottom: 1px solid #111; }
.crumbs button { height: 22px; padding: 0 10px; background: #000; align-items: flex-start; font-weight: 700; }
.viewer { position: relative; flex: 1; overflow: hidden; border-right: 1px solid #666; }
.guide { position: absolute; background: #4c4980; }
.h { left: 0; right: 0; height: 1px; }
.v { top: 0; bottom: 0; width: 1px; }
.g1 { top: 278px; }
.g2 { top: 331px; }
.g3 { left: 728px; }
.g4 { left: 944px; }
.bar { position: absolute; left: 500px; top: 272px; width: 457px; height: 65px; border: 7px solid #777a8e; border-radius: 10px; background: #0ff; color: #1010f0; font: 42px/58px "Liberation Sans", sans-serif; text-align: center; }
.compfoot { display: flex; align-items: center; gap: 7px; height: 23px; padding: 0 0 2px 4px; border-top: 1px solid #111; }
.drop { justify-content: space-between; height: 20px; padding: 0 3px; background: #1e1e1e; }
.drop svg { color: #ccc; }
.zoom { width: 64px; }
.time { margin: 0 2px; color: #bbb; }
.full { width: 80px; }
.cam { width: 100px; }
.views { width: 62px; padding: 0; margin-right: 2px; }
.boxed { margin: 0 -4px; padding: 4px; background: #000; }

.side { display: flex; flex-direction: column; background: #000; }
.infotab { width: 65px; padding-left: 12px; gap: 12px; }
.audiotab { width: 69px; padding-left: 15px; }
.info { height: 144px; }
.infogrid { display: grid; grid-template-columns: 21px 74px 10px 1fr; column-gap: 4px; height: 64px; padding: 5px 8px; border-bottom: 1px solid #1f1f1f; }
.chip { width: 20px; height: 20px; margin-top: 12px; background: #000; }
.infogrid svg { margin: 22px 0; }
.infogrid dl { display: grid; grid-template-columns: 18px 1fr; grid-auto-rows: 13px; line-height: 13px; }
.dur { padding: 4px 7px; line-height: 14px; }
.floatbar { display: flex; justify-content: flex-end; align-items: center; height: 29px; margin-left: -2px; padding-right: 1px; background: #fff; }
.floatbar button { width: 19px; height: 19px; justify-content: center; background: #e2e2e2; color: #fff; }
.para { height: 110px; border-bottom: 1px solid #111; }
.phead { display: flex; align-items: center; gap: 13px; height: 31px; padding-left: 12px; color: #bbb; }
.aligns { display: flex; gap: 10px; height: 29px; margin: 0 9px; padding-top: 6px; align-items: flex-start; border-bottom: 1px solid #1f1f1f; }
.aligns .wide { margin-left: 5px; }
.indents { display: grid; grid-template-columns: 71px 66px 1fr; grid-auto-rows: 18px; padding: 3px 0 0 6px; white-space: nowrap; color: #888; }
.indents span { display: flex; align-items: center; gap: 4px; }
.side b { color: #2d8fbd; font-weight: 400; }
.spare { flex: 1; }
.preview { height: 70px; margin-top: 4px; overflow: hidden; }
.transport { display: flex; gap: 12px; height: 27px; margin: 0 7px; padding: 7px 0 0 39px; border-bottom: 1px solid #1f1f1f; align-items: flex-start; }
.keys { padding: 4px 7px; }
.chars { height: 180px; margin-top: 5px; overflow: hidden; }
.presets { width: 99px; padding-left: 8px; }
.chartab { width: 67px; padding-left: 13px; gap: 13px; }
.chars .tabs .bright { margin-left: auto; padding-right: 4px; }
.fonts { display: flex; gap: 8px; padding: 9px 0 2px 5px; }
.fsel { display: grid; gap: 5px; width: 122px; }
.dd { position: relative; height: 19px; background: #1e1e1e; color: #bbb; }
.dd select { width: 100%; height: 19px; padding-left: 7px; }
.dd::after { content: ""; position: absolute; right: 5px; top: 6px; border: 4px solid transparent; border-top: 6px solid #ccc; }
.metrics { display: grid; grid-template-columns: 86px 1fr; column-gap: 18px; grid-auto-rows: 20px; margin: 0 5px; padding: 4px 4px 6px 0; border-top: 1px solid #1f1f1f; }
.metrics.scale { padding-top: 2px; }
.metrics span, .stroke span { display: flex; align-items: center; gap: 8px; color: #888; white-space: nowrap; }
.metrics em, .stroke em { flex: 1; font-style: normal; }
.stroke { display: flex; align-items: center; margin: 0 5px; height: 31px; border-top: 1px solid #1f1f1f; }
.stroke span { width: 88px; padding-right: 2px; }
.stroke .dd { flex: 1; }

.queue { margin-top: 4px; margin-left: 2px; }
.qcomp { width: 107px; padding-left: 25px; gap: 11px; }
.qtab { width: 106px; padding-left: 11px; gap: 11px; }
.progress { height: 8px; margin: 6px 9px 0 8px; background: #161616; }
.current { display: flex; gap: 5px; margin: 18px 9px 7px 8px; }
.status { display: flex; flex: 1; height: 18px; margin-top: 3px; background: #1c1c1c; font-weight: 700; }
.status span { display: flex; align-items: center; flex: 1; }
.status .now { flex: 0 0 735px; gap: 9px; padding-left: 4px; }
.status .elapsed { flex: 0 0 623px; }
.current button { width: 92px; height: 19px; justify-content: center; background: #1c1c1c; color: #bbb; }
.current button:disabled { color: #555; }
.current .go { background: #216486; color: #ccc; }
.list { padding-bottom: 32px; border-right: 18px solid #161616; }
table { width: calc(100% + 18px); table-layout: fixed; border-collapse: collapse; }
tr { height: 19px; }
th, td { padding: 0; text-align: left; font-weight: 400; white-space: nowrap; line-height: 16px; }
th { height: 18px; padding-left: 7px; background: #333; color: #888; border-right: 1px solid #222; }
.c1 { width: 60px; } .c2 { width: 22px; } .c3 { width: 24px; } .c4 { width: 117px; } .c5 { width: 100px; } .c6 { width: 130px; } .c7 { width: 130px; } .c8 { width: 90px; }
thead { border: solid #151515; border-width: 1px 0; }
th:first-child { padding-left: 21px; }
th.tag { padding-left: 5px; }
td { border-bottom: 1px solid #222; }
.item { background: #1f1f1f; }
.item td { padding-left: 3px; }
.item td:first-child { padding-left: 5px; color: #bbb; }
.item td:first-child svg { display: inline-block; }
.item .name { padding-left: 5px; font-weight: 700; }
.tick { margin-left: 20px; }
.tick input { appearance: none; width: 0; height: 0; }
.detail { display: grid; grid-template-columns: 8px 54px 16px 216px 28px 40px 16px 1fr; align-items: center; height: 18px; padding-left: 23px; column-gap: 5px; }
.detail b { padding-left: 4px; font-size: 12px; white-space: nowrap; }
.detail b.r { justify-self: end; padding: 0; }
.detail a { color: #2d8fbd; }
.detail.done a { color: #808080; }
.detail svg, .detail button { color: #ccc; justify-content: center; }
.detail.done button, .detail.done button svg { color: #555; }
.detail .dd { grid-column: 7 / 9; width: 115px; height: 18px; }
.pm { display: flex; gap: 6px; }
.pm button { font-weight: 700; width: 10px; }

.dialog { position: absolute; left: 89px; top: 110px; width: 785px; background: #fff; color: #333; box-shadow: 0 0 14px rgba(0, 0, 0, .6); }
.dialog header { display: flex; align-items: center; gap: 6px; height: 28px; padding: 0 10px 0 9px; color: #000; }
.dialog header button { margin-left: auto; }
.address { display: flex; align-items: center; height: 40px; padding: 0 8px 0 13px; }
.arrows { display: flex; align-items: center; gap: 17px; width: 92px; color: #ccc; }
.arrows .recent { margin: 0 -6px 0 -5px; }
.path { display: flex; align-items: center; flex: 1; gap: 6px; height: 31px; padding: 0 10px 0 4px; border: 1px solid #e0e0e0; }
.folder { margin-right: 3px; }
.sep, .open, .find svg { color: #666; }
.path .open { margin-left: auto; }
.refresh { width: 33px; height: 31px; justify-content: center; border: 1px solid #e0e0e0; border-left: 0; }
.find { display: flex; align-items: center; width: 203px; height: 31px; margin-left: 8px; padding: 0 8px 0 6px; border: 1px solid #e0e0e0; }
.find input { flex: 1; min-width: 0; }
.find input::placeholder { color: #777; opacity: 1; }
.cmds { display: flex; align-items: center; height: 32px; padding: 0 15px 0 19px; background: #f5f6f7; border-bottom: 1px solid #e9eaeb; color: #31527f; }
.cmds button { gap: 5px; margin-right: 29px; }
.cmds .view { gap: 10px; margin-left: auto; }
.cmds button:last-child { margin: 0; }
.body { display: flex; height: 307px; }
.tree { width: 139px; padding-top: 8px; list-style: none; }
.tree li { display: flex; align-items: center; gap: 3px; height: 24px; padding-left: 32px; white-space: nowrap; }
.tree .root { padding-left: 24px; }
.tree .last { margin-top: 8px; }
.tree .sel { background: #d9d9d9; }
.scroll { display: flex; flex-direction: column; align-items: center; justify-content: space-between; width: 17px; padding: 5px 0 3px; background: #f0f0f0; color: #555; }
.scroll i { width: 17px; height: 125px; margin-top: 113px; background: #cdcdcd; }
.up { transform: rotate(180deg); }
.empty { flex: 1; padding: 16px 0 0 244px; color: #777; }
.bottom { padding: 11px 5px 12px 0; background: #f0f0f0; }
.field { display: grid; grid-template-columns: 118px 1fr; gap: 7px; align-items: center; height: 24px; }
.field label { text-align: right; white-space: nowrap; }
.combo { display: flex; align-items: center; height: 22px; padding: 0 5px 0 2px; background: #fff; border: 1px solid #a0a0a0; color: #333; }
.combo input, .combo select { flex: 1; }
.combo.gray { background: #e1e1e1; border-color: #bbb; }
.combo svg { color: #777; }
.subfolder { display: grid; justify-items: start; gap: 2px; padding: 10px 0 0 150px; }
.subfolder label { position: relative; display: flex; align-items: center; gap: 3px; height: 20px; color: #1a74d8; }
.subfolder label input { appearance: none; width: 14px; height: 14px; background: #fff; border: 1px solid #555; }
.mark { position: absolute; left: 2px; top: 5px; }
.subfolder > input { width: 136px; height: 25px; padding: 0 2px 4px; background: #fff; border: 1px solid #4d9ee0; }
.actions { display: flex; align-items: center; gap: 13px; padding: 26px 13px 0 10px; }
.hide { gap: 5px; margin-right: auto; }
.btn { width: 87px; height: 25px; justify-content: center; background: #e1e1e1; border: 1px solid #ccc; }
.btn.primary { border: 2px solid #0078d7; }

.notes { position: absolute; left: 0; top: 0; pointer-events: none; font: 32px "Noto Sans", sans-serif; }
.url { fill: #c8c8c8; font: 16px "Liberation Sans", sans-serif; }
```
